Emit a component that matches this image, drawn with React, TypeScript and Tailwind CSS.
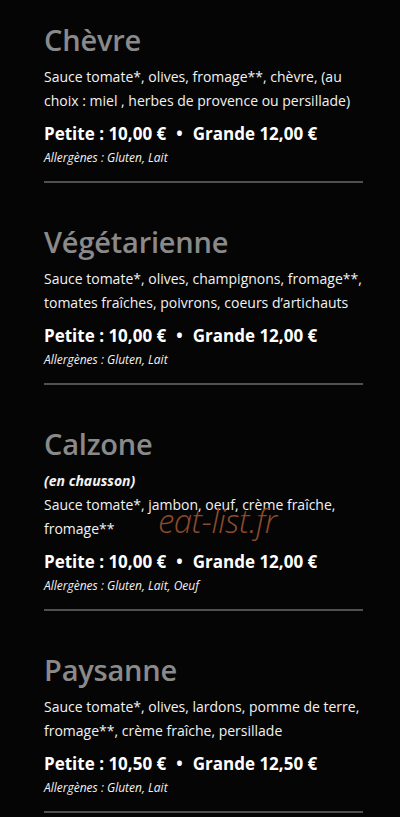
import React from "react";

type Item = {
  name: string;
  note?: string;
  desc: string;
  small: string;
  large: string;
  allergens: string;
};

const items: Item[] = [
  {
    name: "Chèvre",
    desc: "Sauce tomate*, olives, fromage**, chèvre, (au choix : miel , herbes de provence ou persillade)",
    small: "10,00 €",
    large: "12,00 €",
    allergens: "Allergènes : Gluten, Lait",
  },
  {
    name: "Végétarienne",
    desc: "Sauce tomate*, olives, champignons, fromage**, tomates fraîches, poivrons, coeurs d’artichauts",
    small: "10,00 €",
    large: "12,00 €",
    allergens: "Allergènes : Gluten, Lait",
  },
  {
    name: "Calzone",
    note: "(en chausson)",
    desc: "Sauce tomate*, jambon, oeuf, crème fraîche, fromage**",
    small: "10,00 €",
    large: "12,00 €",
    allergens: "Allergènes : Gluten, Lait, Oeuf",
  },
  {
    name: "Paysanne",
    desc: "Sauce tomate*, olives, lardons, pomme de terre, fromage**, crème fraîche, persillade",
    small: "10,50 €",
    large: "12,50 €",
    allergens: "Allergènes : Gluten, Lait",
  },
];

export default function App() {
  return (
    <div
      className="relative w-[400px] h-[817px] overflow-hidden bg-[#050505] pl-[44px] pt-[22px]"
      style={{ fontFamily: '"Open Sans", "Noto Sans", sans-serif' }}
    >
      <div className="w-[320px] flex flex-col gap-[41px]">
        {items.map((it) => (
          <div key={it.name} className="flex flex-col">
            <h2 className="text-[29px] leading-[36px] font-semibold text-[#8a8a8a] tracking-[-0.2px]">
              {it.name}
            </h2>
            <div className="mt-[7px] text-[14px] leading-[24px] text-[#f2f2f2]">
              {it.note && <div className="font-bold italic">{it.note}</div>}
              <p>{it.desc}</p>
            </div>
            <div className="mt-[9px] text-[17px] leading-[24px] font-bold text-white">
              Petite : {it.small}
              <span className="mx-[10px]">•</span>
              Grande {it.large}
            </div>
            <div className="mt-[4px] text-[12px] leading-[16px] italic text-[#f2f2f2]">
              {it.allergens}
            </div>
            <div className="mt-[15px] h-[2px] w-[319px] bg-[#505050]" />
          </div>
        ))}
      </div>
      <div className="absolute left-[158px] top-[501px] text-[33px] leading-[40px] italic font-light text-[#8c4a2c] tracking-[-0.5px]">
        eat-list.fr
      </div>
    </div>
  );
}
